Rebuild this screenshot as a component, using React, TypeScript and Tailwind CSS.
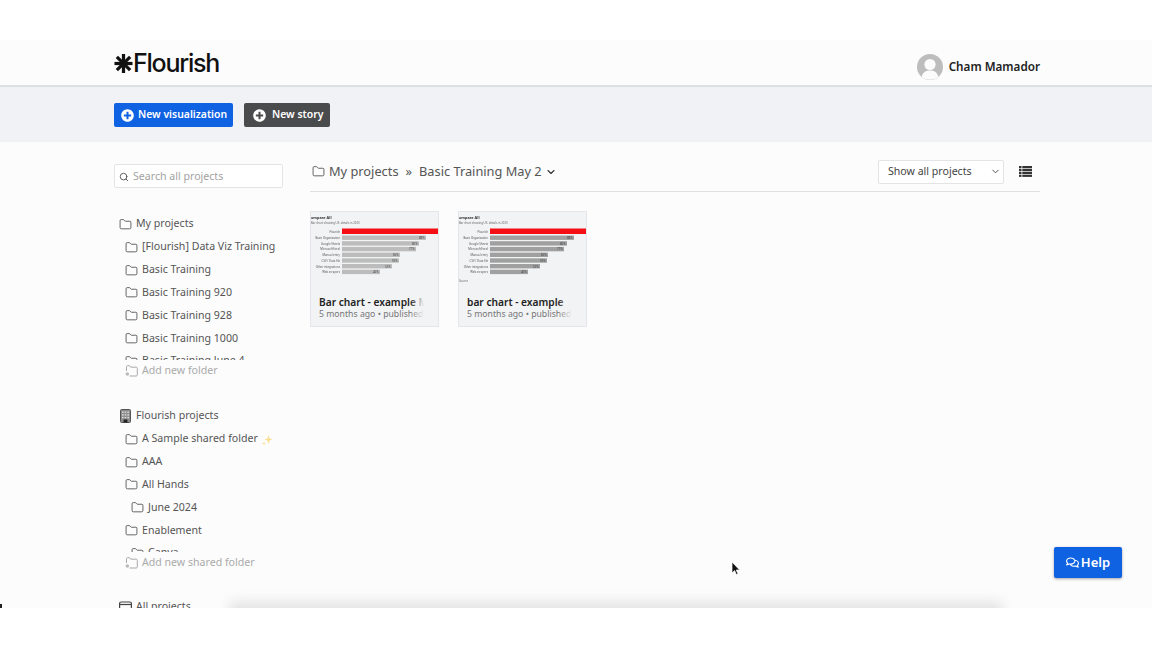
import { ChevronDown, Folder, Search } from "lucide-react";
import { FaPlusCircle, FaRegComments } from "react-icons/fa";

const bars = [
  { label: "Basic Organization", end: 84, pct: "88%" },
  { label: "Google Sheets", end: 77, pct: "80%" },
  { label: "Microsoft Excel", end: 74, pct: "77%" },
  { label: "Manual entry", end: 58, pct: "60%" },
  { label: "CSV / Data file", end: 57, pct: "59%" },
  { label: "Other integrations", end: 50, pct: "52%" },
  { label: "Web scrapers", end: 38, pct: "40%" },
];

const myFolders = [
  { name: "[Flourish] Data Viz Training" },
  { name: "Basic Training" },
  { name: "Basic Training 920" },
  { name: "Basic Training 928" },
  { name: "Basic Training 1000" },
  { name: "Basic Training June 4" },
];

const sharedFolders = [
  { name: "A Sample shared folder", spark: true },
  { name: "AAA" },
  { name: "All Hands" },
  { name: "June 2024", nested: true },
  { name: "Enablement" },
  { name: "Canva", nested: true },
];

const StarLogo = () => (
  <svg width="19" height="19" viewBox="0 0 20 20" className="text-[#111]">
    <g stroke="currentColor" strokeWidth="3.4">
      <line x1="10" y1="0" x2="10" y2="20" />
      <line x1="0.5" y1="10" x2="19.5" y2="10" />
      <line x1="3" y1="3" x2="17" y2="17" />
      <line x1="17" y1="3" x2="3" y2="17" />
    </g>
  </svg>
);

const Avatar = () => (
  <svg width="26" height="26" viewBox="0 0 26 26">
    <circle cx="13" cy="13" r="13" fill="#bdbdbd" />
    <circle cx="13" cy="10.5" r="5.6" fill="#fcfcfc" />
    <path d="M4.5 23 C6 17.5 9.5 16.5 13 16.5 C16.5 16.5 20 17.5 21.5 23 C17 26.6 9 26.6 4.5 23 Z" fill="#fcfcfc" />
  </svg>
);

const ListIcon = () => (
  <svg width="13" height="11" viewBox="0 0 13 11" className="text-[#333]">
    <g fill="currentColor">
      <rect x="0" y="0" width="2.5" height="2.2" />
      <rect x="3.3" y="0" width="9.7" height="2.2" />
      <rect x="0" y="2.9" width="2.5" height="2.2" />
      <rect x="3.3" y="2.9" width="9.7" height="2.2" />
      <rect x="0" y="5.8" width="2.5" height="2.2" />
      <rect x="3.3" y="5.8" width="9.7" height="2.2" />
      <rect x="0" y="8.7" width="2.5" height="2.2" />
      <rect x="3.3" y="8.7" width="9.7" height="2.2" />
    </g>
  </svg>
);

const BuildingIcon = () => (
  <svg width="11" height="14" viewBox="0 0 11 14" className="shrink-0">
    <rect x="0.5" y="0.5" width="10" height="13" rx="1" fill="#8b8b8b" stroke="#555" />
    <g fill="#dcdcdc">
      <rect x="2" y="2.5" width="1.6" height="1.4" />
      <rect x="4.7" y="2.5" width="1.6" height="1.4" />
      <rect x="7.4" y="2.5" width="1.6" height="1.4" />
      <rect x="2" y="5.2" width="1.6" height="1.4" />
      <rect x="4.7" y="5.2" width="1.6" height="1.4" />
      <rect x="7.4" y="5.2" width="1.6" height="1.4" />
      <rect x="2" y="7.9" width="1.6" height="1.4" />
      <rect x="4.7" y="7.9" width="1.6" height="1.4" />
      <rect x="7.4" y="7.9" width="1.6" height="1.4" />
    </g>
    <rect x="3.6" y="10.5" width="3.8" height="3" fill="#222" />
  </svg>
);

const AddFolderIcon = () => (
  <svg width="13" height="12" viewBox="0 0 13 12" fill="none" stroke="#aaa" strokeWidth="1" className="shrink-0">
    <path d="M1.5 6 V1.5 C1.5 1 1.8 0.7 2.3 0.7 H4.6 L5.8 2.2 H11.3 C11.9 2.2 12.3 2.6 12.3 3.2 V10 C12.3 10.6 11.9 11 11.3 11 H4.5" />
    <circle cx="2.3" cy="9" r="1.8" fill="#bbb" stroke="none" />
  </svg>
);

const Spark = () => (
  <svg width="11" height="11" viewBox="0 0 11 11" className="shrink-0">
    <path d="M6.5 1 L7.5 4.5 L10.5 5.5 L7.5 6.5 L6.5 10 L5.5 6.5 L2.5 5.5 L5.5 4.5 Z" fill="#f7df8f" />
    <path d="M2 7.5 L2.5 9 L4 9.5 L2.5 10 L2 11 L1.5 10 L0 9.5 L1.5 9 Z" fill="#f7df8f" />
  </svg>
);

const FolderRow = ({ name, nested, spark }: { name: string; nested?: boolean; spark?: boolean }) => (
  <div className={`flex h-[22.8px] items-center gap-[4px] ${nested ? "pl-[17px]" : "pl-[11px]"}`}>
    <Folder size={13} strokeWidth={1.5} className="shrink-0 text-[#444]" />
    <span className="whitespace-nowrap">{name}</span>
    {spark && <Spark />}
  </div>
);

const Chart = ({ fill, source }: { fill: string; source?: string }) => (
  <svg width="128" height="72" viewBox="0 0 128 72" className="block blur-[0.3px]">
    <text x="0" y="7" fontSize="3.8" fontWeight="700" fill="#333">ompare All</text>
    <text x="0" y="12" fontSize="2.8" fill="#666">Bar chart showing US. details in 2023</text>
    <rect x="31" y="16.5" width="97" height="5.5" fill="#f40f14" />
    <text x="29" y="20.5" fontSize="2.8" fill="#555" textAnchor="end">Flourish</text>
    {bars.map((bar, idx) => (
      <g key={idx}>
        <text x="29" y={27 + idx * 5.7} fontSize="2.8" fill="#555" textAnchor="end">{bar.label}</text>
        <rect x="31" y={23.5 + idx * 5.7} width={bar.end} height="4.4" fill={fill} />
        <text x={29.5 + bar.end} y={27 + idx * 5.7} fontSize="2.8" fill="#444" textAnchor="end">{bar.pct}</text>
      </g>
    ))}
    {source && <text x="0" y="70" fontSize="2.8" fill="#666">{source}</text>}
  </svg>
);

const ProjectCard = ({ title, fill, source }: { title: string; fill: string; source?: string }) => (
  <div className="relative h-[116px] w-[129px] overflow-hidden border border-[#e4e6e9] bg-[#f1f3f5]">
    <Chart fill={fill} source={source} />
    <div className="whitespace-nowrap pt-[11px] pl-2 text-[10.2px] leading-[14px] font-semibold text-[#222]">{title}</div>
    <div className="whitespace-nowrap pl-2 text-[8.7px] leading-[11px] text-[#777]">5 months ago • published</div>
    <div className="absolute right-0 bottom-0 h-[36px] w-[28px] bg-gradient-to-r from-transparent via-[#f1f3f5] to-[#f1f3f5]" />
  </div>
);

export default function App() {
  return (
    <div className="h-[648px] w-[1152px] bg-white py-10 font-['Noto_Sans',sans-serif]">
      <div className="relative h-[568px] overflow-hidden bg-[#fcfcfc]">
        <header className="border-b-2 border-[#dddfe0]">
          <div className="flex h-[45px] items-center justify-between pt-[9px] pr-[112px] pl-[114px]">
            <div className="mb-[8px] flex items-center">
              <StarLogo />
              <span className="font-['Inter',sans-serif] text-[25px] leading-none font-medium tracking-[-0.05em] text-[#111]">Flourish</span>
            </div>
            <div className="flex items-center gap-[6px]">
              <Avatar />
              <span className="text-[11.7px] font-semibold text-[#222]">Cham Mamador</span>
            </div>
          </div>
        </header>

        <div className="flex h-[55px] items-center gap-[11px] bg-[#f0f2f5] pt-[1px] pl-[114px]">
          <button className="flex h-6 w-[119px] items-center gap-[4px] whitespace-nowrap rounded-[2px] bg-[#0f62e2] pl-[7px] text-[10.4px] font-semibold text-white">
            <FaPlusCircle size={13} />
            New visualization
          </button>
          <button className="flex h-6 w-[86px] items-center gap-[6px] whitespace-nowrap rounded-[2px] bg-[#4a4b4c] pl-[9px] text-[10.4px] font-semibold text-white">
            <FaPlusCircle size={13} />
            New story
          </button>
        </div>

        <div className="flex gap-[27px] pt-[18px] pr-[112px] pl-[114px]">
          <aside className="w-[169px] shrink-0 pt-[4px] text-[10.6px] text-[#555]">
            <div className="flex h-6 items-center gap-[4px] rounded-[2px] border border-[#e3e4e6] bg-white pt-[1px] pl-[4px] text-[#a2a2a2]">
              <Search size={10} strokeWidth={2.2} className="text-[#555]" />
              Search all projects
            </div>

            <div className="mt-[25px] flex h-[22px] items-center gap-[4px] pl-[5px]">
              <Folder size={13} strokeWidth={1.5} className="text-[#444]" />
              My projects
            </div>
            <div className="h-[125px] overflow-hidden pt-[1px]">
              {myFolders.map((folder) => (
                <FolderRow key={folder.name} name={folder.name} />
              ))}
            </div>
            <div className="flex h-[22px] items-center gap-[4px] pl-[11px] text-[#aaa]">
              <AddFolderIcon />
              Add new folder
            </div>

            <div className="mt-[23px] flex h-[22px] items-center gap-[5px] pl-[6px]">
              <BuildingIcon />
              Flourish projects
            </div>
            <div className="h-[125px] overflow-hidden pt-[1px]">
              {sharedFolders.map((folder) => (
                <FolderRow key={folder.name} name={folder.name} nested={folder.nested} spark={folder.spark} />
              ))}
            </div>
            <div className="flex h-[22px] items-center gap-[4px] pl-[11px] text-[#aaa]">
              <AddFolderIcon />
              Add new shared folder
            </div>

            <div className="mt-[22px] flex h-[22px] items-center gap-[4px] pl-[5px]">
              <svg width="13" height="13" viewBox="0 0 13 13" fill="none" stroke="#444" strokeWidth="1.2">
                <rect x="0.6" y="1" width="11.8" height="11" rx="1.5" />
                <line x1="0.6" y1="3.5" x2="12.4" y2="3.5" />
              </svg>
              All projects
            </div>
          </aside>

          <main className="min-w-0 flex-1">
            <div className="flex h-[32px] items-center justify-between border-b border-[#dfe0e2] pb-[8px]">
              <div className="flex items-center text-[12.8px] text-[#555]">
                <Folder size={13} strokeWidth={1.5} className="ml-[2px] text-[#444]" />
                <span className="ml-[4px]">My projects</span>
                <span className="mx-[7px]">»</span>
                <span>Basic Training May 2</span>
                <ChevronDown size={12} strokeWidth={2.2} className="ml-[3px] text-[#333]" />
              </div>
              <div className="flex items-center gap-[15px] pr-2">
                <div className="flex h-6 w-[126px] items-center justify-between rounded-[2px] border border-[#e3e4e6] bg-white pr-[2px] pl-[9px] text-[10.6px] text-[#444]">
                  Show all projects
                  <ChevronDown size={11} className="text-[#444]" />
                </div>
                <ListIcon />
              </div>
            </div>
            <div className="flex gap-[19px] pt-[19px]">
              <ProjectCard title="Bar chart - example May" fill="#bcbcbc" />
              <ProjectCard title="bar chart - example" fill="#a0a0a0" source="Source" />
            </div>
          </main>
        </div>

        <button className="absolute top-[507px] right-[30px] flex h-[31px] w-[68px] items-center justify-center gap-[2px] rounded-[2px] bg-[#0f62e2] text-[13px] font-semibold text-white shadow-[0_1px_3px_rgba(0,0,0,0.35)]">
          <FaRegComments size={13} />
          Help
        </button>

        <svg width="10" height="15" viewBox="0 0 10 15" className="absolute top-[521px] left-[731px]">
          <path d="M1 1 L1 12 L3.6 9.6 L5.4 13.6 L7 12.8 L5.2 9 L8.6 9 Z" fill="#111" stroke="#fff" strokeWidth="0.7" />
        </svg>

        <div className="absolute right-[150px] -bottom-[10px] left-[230px] h-[16px] bg-[#e2e2e2] blur-[6px]" />
        <div className="absolute bottom-0 left-0 h-[4px] w-[2px] bg-[#222]" />
      </div>
    </div>
  );
}
